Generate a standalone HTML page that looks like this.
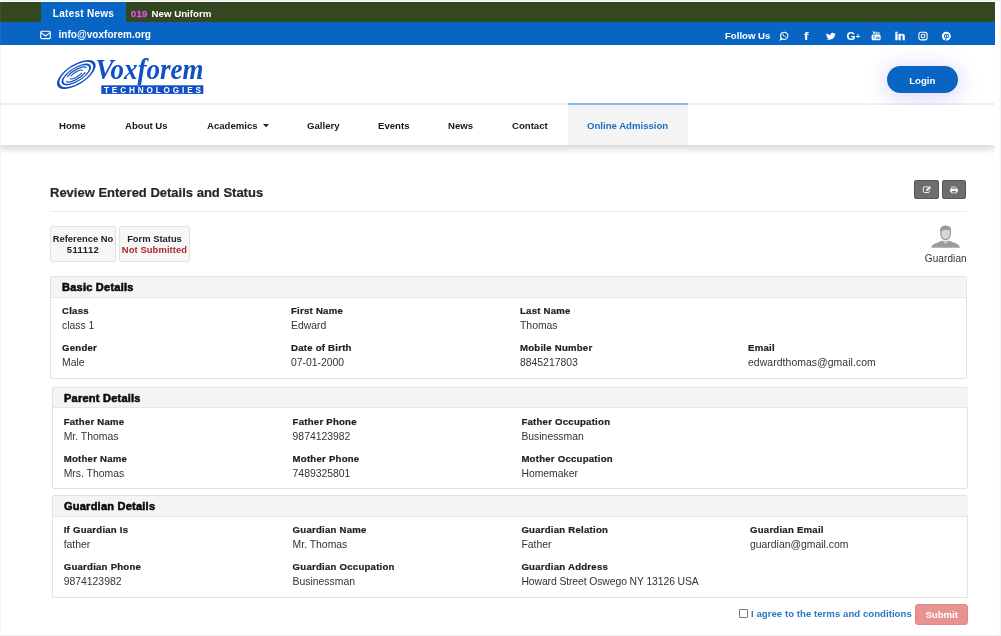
<!DOCTYPE html>
<html lang="en">
<head>
<meta charset="utf-8">
<title>Online Admission - Review Entered Details and Status</title>
<style>
*{box-sizing:border-box;margin:0;padding:0}
html,body{width:1001px;height:636px;overflow:hidden;background:#fff}
body{font-family:"Liberation Sans",sans-serif;font-size:10px;color:#333;position:relative}
.abs{position:absolute;white-space:nowrap}
#page{position:absolute;left:0;top:0;width:1001px;height:636px;overflow:hidden}
#inner{position:absolute;left:0;top:0;width:995px;height:635px;overflow:hidden;will-change:transform}
#frameL{left:0;top:0;width:1px;height:636px;background:rgba(170,170,170,.1)}
#frameB{left:0;top:635px;width:1001px;height:1px;background:#f2f2f2}
#frameR{left:999px;top:0;width:2px;height:636px;background:linear-gradient(90deg,#fbfbfb 50%,#f4f4f4 50%)}
#frameT{left:0;top:0;width:1001px;height:1px;background:#f1f1f1}
#green{left:0;top:2px;width:995px;height:20px;background:#334720}
#latest{left:41px;top:2px;width:85px;height:20px;background:#0865c3;color:#fff;font-size:10px;font-weight:bold;line-height:24.4px;text-align:center;letter-spacing:.27px}
#ticker{left:130px;top:2px;height:20px;line-height:24.4px;color:#fff;font-size:9.7px;font-weight:bold}
#ticker b{color:#e54df0;font-weight:bold;font-size:9.7px;margin-right:1.2px;margin-left:.8px;letter-spacing:.25px;-webkit-text-stroke:.3px #e54df0}
#blue{left:0;top:22px;width:995px;height:23px;background:#0865c3}
#mail{left:58.5px;top:23.4px;height:22px;line-height:23px;color:#fff;font-size:10px;font-weight:bold;letter-spacing:.03px}
#follow{left:725px;top:23.5px;height:22px;line-height:23px;color:#fff;font-size:9.6px;font-weight:bold}
.soc{top:29px;width:12px;height:12px}
#hdrline{left:0;top:103px;width:995px;height:2px;background:#f2f2f2}
#login{left:887px;top:66px;width:70.5px;height:27px;border-radius:14px;background:#0865c3;color:#fff;font-size:9.6px;font-weight:bold;line-height:30.6px;text-align:center;box-shadow:0 3px 20px 3px rgba(120,90,240,.24)}
#nav{left:0;top:105px;width:995px;height:40px;background:#fff;box-shadow:0 4px 7px rgba(0,0,0,.16)}
.nv{top:104px;height:41px;line-height:43.6px;font-size:9.6px;font-weight:bold;color:#181818}
#navact{left:568px;top:103px;width:120px;height:42px;background:#f4f4f4;border-top:2px solid #8db9e6}
#h1{left:50px;top:184.5px;font-size:13px;font-weight:bold;color:#262626;line-height:16px;-webkit-text-stroke:.2px #262626}
.gbtn{top:180px;width:25px;height:18.5px;background:#6e6e6e;border:1px solid #565656;border-radius:2px}
#hr{left:50px;top:211px;width:917px;height:1px;background:#ebebeb}
.rbox{top:226px;height:36px;background:#f7f7f7;border:1px solid #e3e3e3;border-radius:2px;text-align:center;font-size:9.4px;line-height:11.5px;padding-top:5.9px;color:#222;font-weight:bold}
.rbox b{display:block}
.panel{width:917px;height:102px;border:1px solid #e2e2e2;border-radius:2px;background:#fff}
.phead{left:0;top:0;width:915px;height:20px;background:#f4f4f4;border-bottom:1px solid #e6e6e6}
.ptitle{left:11px;top:0;height:20px;line-height:20.8px;font-weight:bold;font-size:11px;color:#0a0a0a;letter-spacing:.24px;-webkit-text-stroke:.55px #0a0a0a}
.lb{font-weight:bold;font-size:9.6px;letter-spacing:.24px;-webkit-text-stroke:.22px #222;color:#222;line-height:12px}
.vl{font-size:10.4px;color:#333;line-height:12px}
#agree{left:751px;top:607.4px;font-size:9.6px;font-weight:bold;color:#2a78bf;line-height:13px;letter-spacing:.04px}
#chk{left:738.5px;top:608.5px;width:9.5px;height:9px;border:1px solid #777;background:#fff;border-radius:1px}
#submit{left:915px;top:604px;width:53.4px;height:21px;border-radius:3px;background:#e89292;border:1px solid #e58585;color:#fff;font-size:9.6px;font-weight:bold;line-height:20.6px;text-align:center}
</style>
</head>
<body>
<div id="page">
<div id="inner">
<div class="abs" id="green"></div>
<div class="abs" id="latest">Latest News</div>
<div class="abs" id="ticker"><b>019</b> New Uniform</div>
<div class="abs" id="blue"></div>
<div class="abs" id="mail">info@voxforem.org</div>
<div class="abs" id="follow">Follow Us</div>

<!-- logo -->
<svg class="abs" style="left:54px;top:52px" width="156" height="48" viewBox="0 0 156 48">
 <g transform="translate(22.3 22.5) rotate(-32.5) scale(1.04)" fill="#1150c2" stroke="none">
  <path fill-rule="evenodd" d="M-21.2 0 A21.2 9.6 0 1 0 21.2 0 A21.2 9.6 0 1 0 -21.2 0 Z M-18.4 0.5 A18.4 8.3 0 1 1 18.4 -0.5 A18.4 8.3 0 1 1 -18.4 0.5 Z"/>
  <path fill-rule="evenodd" d="M-16.2 0.8 A16.2 6.7 0 1 0 16.2 -0.8 A16.2 6.7 0 1 0 -16.2 0.8 Z M-14.2 0.3 A14.2 5.6 0 1 1 14.2 -0.3 A14.2 5.6 0 1 1 -14.2 0.3 Z"/>
  <g fill="none" stroke="#1150c2" stroke-linecap="round">
   <path d="M-11.5 0.6 A11.5 4.2 0 0 0 8 3" stroke-width="1.15"/>
   <path d="M11.5 -0.6 A11.5 4.2 0 0 0 -8 -3" stroke-width="1.15"/>
   <path d="M-7.2 0.3 A7.2 2.2 0 0 0 5 1.6" stroke-width="1"/>
   <path d="M7.2 -0.3 A7.2 2.2 0 0 0 -5 -1.6" stroke-width="1"/>
  </g>
 </g>
 <text id="vox" x="41.5" y="26.5" font-family="Liberation Serif, serif" font-style="italic" font-weight="bold" font-size="30" fill="#1150c2" textLength="108" lengthAdjust="spacingAndGlyphs">Voxforem</text>
 <rect x="47.3" y="33.3" width="102" height="8.6" fill="#1150c2"/>
 <text x="50" y="40.6" font-family="Liberation Sans, sans-serif" font-weight="bold" font-size="8.2" fill="#fff" textLength="97" lengthAdjust="spacing">TECHNOLOGIES</text>
</svg>

<!-- envelope -->
<svg class="abs" style="left:40px;top:30px" width="11" height="10" viewBox="0 0 11 10"><rect x="0.7" y="1.2" width="9.6" height="7.4" rx="1" fill="none" stroke="#fff" stroke-width="1.1"/><path d="M1 2.6 L5.5 6 L10 2.6" fill="none" stroke="#fff" stroke-width="1.1"/></svg>
<!-- whatsapp -->
<svg class="abs soc" style="left:777.6px;top:29.6px;transform:scale(.93)" viewBox="0 0 12 12"><circle cx="6.2" cy="5.8" r="3.9" fill="none" stroke="#fff" stroke-width="1.2"/><path d="M1.2 11 L2.2 7.6 L4.6 9.9 Z" fill="#fff"/><path d="M4.6 3.9 Q4.3 6.6 7.8 7.6 L8.3 6.7 L7.2 6.2 L6.8 6.6 Q5.7 6.1 5.5 5.1 L5.8 4.7 L5.3 3.7 Z" fill="#fff"/></svg>
<!-- facebook -->
<svg class="abs soc" style="left:800.1px;top:29.5px;transform:scale(1.22,.95)" viewBox="0 0 12 12"><text x="6.2" y="10.6" text-anchor="middle" font-family="Liberation Sans, sans-serif" font-weight="bold" font-size="12" fill="#fff">f</text></svg>
<!-- twitter -->
<svg class="abs soc" style="left:824.9px;top:29.6px;transform:scale(.92,.8)" viewBox="0 0 12 12"><path d="M11 2.9c-.4.2-.8.3-1.2.35.45-.27.78-.68.94-1.18-.42.25-.88.42-1.36.52A2.13 2.13 0 0 0 5.7 4.55 6.1 6.1 0 0 1 1.3 2.3a2.14 2.14 0 0 0 .66 2.86c-.35 0-.68-.1-.97-.26 0 1.05.74 1.92 1.72 2.12-.32.08-.65.1-.97.04.27.85 1.06 1.47 2 1.49A4.3 4.3 0 0 1 1 9.45a6.08 6.08 0 0 0 9.36-5.4c.42-.3.78-.68 1.06-1.1z" fill="#fff" transform="translate(-0.2 0.3)"/></svg>
<!-- google plus -->
<svg class="abs" style="left:845.6px;top:29.5px" width="16" height="12" viewBox="0 0 16 12"><text x="0.6" y="10.3" font-family="Liberation Sans, sans-serif" font-weight="bold" font-size="11.5" fill="#fff">G</text><text x="9.8" y="8.8" font-family="Liberation Sans, sans-serif" font-weight="bold" font-size="7.5" fill="#fff">+</text></svg>
<!-- youtube -->
<svg class="abs soc" style="left:870.4px;top:28.8px" viewBox="0 0 12 12"><rect x="1.6" y="5.6" width="9" height="5.6" rx="1.3" fill="#fff"/><path d="M3 2.4 L4 4.3 L5 2.4 M4 4.3 V5.2" stroke="#fff" stroke-width=".9" fill="none"/><circle cx="6.4" cy="4.1" r=".85" fill="none" stroke="#fff" stroke-width=".8"/><path d="M8 3.2 V4.6 Q8.5 5.2 9.2 4.6 V3.2" stroke="#fff" stroke-width=".8" fill="none"/><path d="M3 7 H5 M4 7 V10 M6 8 V9.6 H7 V8 M8 7 V10 M8 8.3 H9.2 V9.7 H8" stroke="#0865c3" stroke-width=".6" fill="none"/></svg>
<!-- linkedin -->
<svg class="abs soc" style="left:894px;top:29.5px;transform:scale(1.04,.9)" viewBox="0 0 12 12"><text x="6" y="10.6" text-anchor="middle" font-family="Liberation Sans, sans-serif" font-weight="bold" font-size="11.5" fill="#fff" stroke="#fff" stroke-width=".35" letter-spacing="-0.1">in</text></svg>
<!-- instagram -->
<svg class="abs soc" style="left:917.1px;top:29.9px;transform:scale(.93,.9)" viewBox="0 0 12 12"><rect x="1.6" y="1.9" width="8.8" height="8.4" rx="2.3" fill="none" stroke="#fff" stroke-width="1.15"/><circle cx="6" cy="6.1" r="2" fill="none" stroke="#fff" stroke-width="1.1"/><circle cx="8.5" cy="3.8" r=".55" fill="#fff"/></svg>
<!-- pinterest -->
<svg class="abs soc" style="left:940.4px;top:29.7px;transform:scale(.98,.94)" viewBox="0 0 12 12"><circle cx="6.3" cy="6.1" r="4.6" fill="#fff"/><path d="M6.4 5.4 L5.6 10.3 M4.5 7.2 C3.4 3.2 9.4 3 8.4 6.6 C8 8 6.9 8 6.4 7.4" stroke="#0865c3" stroke-width="1.05" fill="none" stroke-linecap="round"/></svg>
<!-- avatar -->
<svg class="abs" style="left:929px;top:222.6px" width="33" height="26.4" viewBox="0 0 33 27" preserveAspectRatio="none"><path d="M2.2 25.2 Q3 21.6 8 20.2 L13.3 17.8 Q16.6 20 19.9 17.8 L25.2 20.2 Q30.2 21.6 31 25.2 Z" fill="#9c9c9c"/><path d="M11.2 9 Q10 3 16.6 2.6 Q23.2 3 22 9 Q22.4 12.5 20.6 15.6 Q16.6 20 12.6 15.6 Q10.8 12.5 11.2 9Z" fill="#9a9a9a"/><path d="M12.6 8.6 Q14.5 6.4 16.8 7 Q19.4 7.4 20.8 6.6 Q21.4 10.5 20.2 14 Q16.6 19 13.2 14 Q12 11 12.6 8.6Z" fill="#d6d6d6"/><path d="M14.2 18.6 L16.6 21.6 L19 18.6 Q16.6 19.8 14.2 18.6Z" fill="#d8d8d8"/></svg>
<div class="abs" id="hdrline"></div>
<div class="abs" id="login">Login</div>
<div class="abs" id="nav"></div>
<div class="abs" id="navact"></div>
<div class="abs nv" style="left:59px">Home</div>
<div class="abs nv" style="left:125px">About Us</div>
<div class="abs nv" style="left:207px">Academics</div>
<div class="abs nv" style="left:307px">Gallery</div>
<div class="abs nv" style="left:378px">Events</div>
<div class="abs nv" style="left:448px">News</div>
<div class="abs nv" style="left:512px">Contact</div>
<div class="abs nv" style="left:587px;color:#1f6fc0">Online Admission</div>
<!-- caret -->
<svg class="abs" style="left:262px;top:123px" width="8" height="5" viewBox="0 0 8 5"><path d="M1 1 H7 L4 4.2 Z" fill="#222"/></svg>
<div class="abs" id="h1">Review Entered Details and Status</div>
<div class="abs gbtn" style="left:914.4px;width:25px"></div>
<div class="abs gbtn" style="left:942px;width:24px"></div>
<!-- edit icon -->
<svg class="abs" style="left:921.7px;top:185px" width="10" height="9.2" viewBox="0 0 12 11"><path d="M8 2.2 H3 Q1.6 2.2 1.6 3.6 V7.6 Q1.6 9 3 9 H7.4 Q8.8 9 8.8 7.6 V6.6" fill="none" stroke="#fff" stroke-width="1.1"/><path d="M5 7.2 L5.3 5.5 L9.3 1.5 L10.8 3 L6.8 7 Z" fill="#fff"/></svg>
<!-- print icon -->
<svg class="abs" style="left:949px;top:185.8px" width="10" height="7.8" viewBox="0 0 12 11" preserveAspectRatio="none"><path d="M3.2 4.2 V1.4 H7.6 L8.8 2.6 V4.2" fill="none" stroke="#fff" stroke-width="1"/><rect x="1.3" y="4" width="9.4" height="4.4" rx="1.2" fill="#fff"/><rect x="3.2" y="6.6" width="5.6" height="3.2" fill="#6e6e6e" stroke="#fff" stroke-width="1"/></svg>
<div class="abs" id="hr"></div>
<div class="abs rbox" style="left:50px;width:66px"><b>Reference No</b><span style="letter-spacing:.45px">511112</span></div>
<div class="abs rbox" style="left:119px;width:71px"><b>Form Status</b><b style="color:#ab272b;letter-spacing:.1px">Not Submitted</b></div>
<div class="abs" style="left:924.8px;top:253px;font-size:10px;color:#333;line-height:12px;letter-spacing:.1px">Guardian</div>

<div class="abs panel" style="left:50px;top:276px;height:103px">
 <div class="abs phead" style="height:21px"></div><div class="abs ptitle">Basic Details</div>
 <div class="abs lb" style="left:11px;top:28.1px">Class</div><div class="abs vl" style="left:11px;top:42.9px">class 1</div>
 <div class="abs lb" style="left:240px;top:28.1px">First Name</div><div class="abs vl" style="left:240px;top:42.9px">Edward</div>
 <div class="abs lb" style="left:469px;top:28.1px">Last Name</div><div class="abs vl" style="left:469px;top:42.9px">Thomas</div>
 <div class="abs lb" style="left:11px;top:65.4px">Gender</div><div class="abs vl" style="left:11px;top:79.9px">Male</div>
 <div class="abs lb" style="left:240px;top:65.4px">Date of Birth</div><div class="abs vl" style="left:240px;top:79.9px">07-01-2000</div>
 <div class="abs lb" style="left:469px;top:65.4px">Mobile Number</div><div class="abs vl" style="left:469px;top:79.9px">8845217803</div>
 <div class="abs lb" style="left:697px;top:65.4px">Email</div><div class="abs vl" style="left:697px;top:79.9px;letter-spacing:.08px">edwardthomas@gmail.com</div>
</div>

<div class="abs panel" style="left:52px;top:387px;height:102px;width:916px">
 <div class="abs phead"></div><div class="abs ptitle">Parent Details</div>
 <div class="abs lb" style="left:10.7px;top:28.1px">Father Name</div><div class="abs vl" style="left:10.7px;top:42.9px">Mr. Thomas</div>
 <div class="abs lb" style="left:239.6px;top:28.1px">Father Phone</div><div class="abs vl" style="left:239.6px;top:42.9px">9874123982</div>
 <div class="abs lb" style="left:468.4px;top:28.1px">Father Occupation</div><div class="abs vl" style="left:468.4px;top:42.9px">Businessman</div>
 <div class="abs lb" style="left:10.7px;top:65.4px">Mother Name</div><div class="abs vl" style="left:10.7px;top:79.9px">Mrs. Thomas</div>
 <div class="abs lb" style="left:239.6px;top:65.4px">Mother Phone</div><div class="abs vl" style="left:239.6px;top:79.9px">7489325801</div>
 <div class="abs lb" style="left:468.4px;top:65.4px">Mother Occupation</div><div class="abs vl" style="left:468.4px;top:79.9px">Homemaker</div>
</div>

<div class="abs panel" style="left:52px;top:495px;height:103px;width:916px">
 <div class="abs phead" style="height:21px"></div><div class="abs ptitle">Guardian Details</div>
 <div class="abs lb" style="left:10.7px;top:28.1px">If Guardian Is</div><div class="abs vl" style="left:10.7px;top:42.9px">father</div>
 <div class="abs lb" style="left:239.6px;top:28.1px">Guardian Name</div><div class="abs vl" style="left:239.6px;top:42.9px">Mr. Thomas</div>
 <div class="abs lb" style="left:468.4px;top:28.1px">Guardian Relation</div><div class="abs vl" style="left:468.4px;top:42.9px">Father</div>
 <div class="abs lb" style="left:697px;top:28.1px">Guardian Email</div><div class="abs vl" style="left:697px;top:42.9px">guardian@gmail.com</div>
 <div class="abs lb" style="left:10.7px;top:65.4px">Guardian Phone</div><div class="abs vl" style="left:10.7px;top:79.9px">9874123982</div>
 <div class="abs lb" style="left:239.6px;top:65.4px">Guardian Occupation</div><div class="abs vl" style="left:239.6px;top:79.9px">Businessman</div>
 <div class="abs lb" style="left:468.4px;top:65.4px">Guardian Address</div><div class="abs vl" style="left:468.4px;top:79.9px;letter-spacing:-.1px">Howard Street Oswego NY 13126 USA</div>
</div>

<div class="abs" id="chk"></div>
<div class="abs" id="agree">I agree to the terms and conditions</div>
<div class="abs" id="submit">Submit</div>
</div>
<div class="abs" id="frameL"></div>
<div class="abs" id="frameB"></div>
<div class="abs" id="frameR"></div>
<div class="abs" id="frameT"></div>
</div>
</body>
</html>
